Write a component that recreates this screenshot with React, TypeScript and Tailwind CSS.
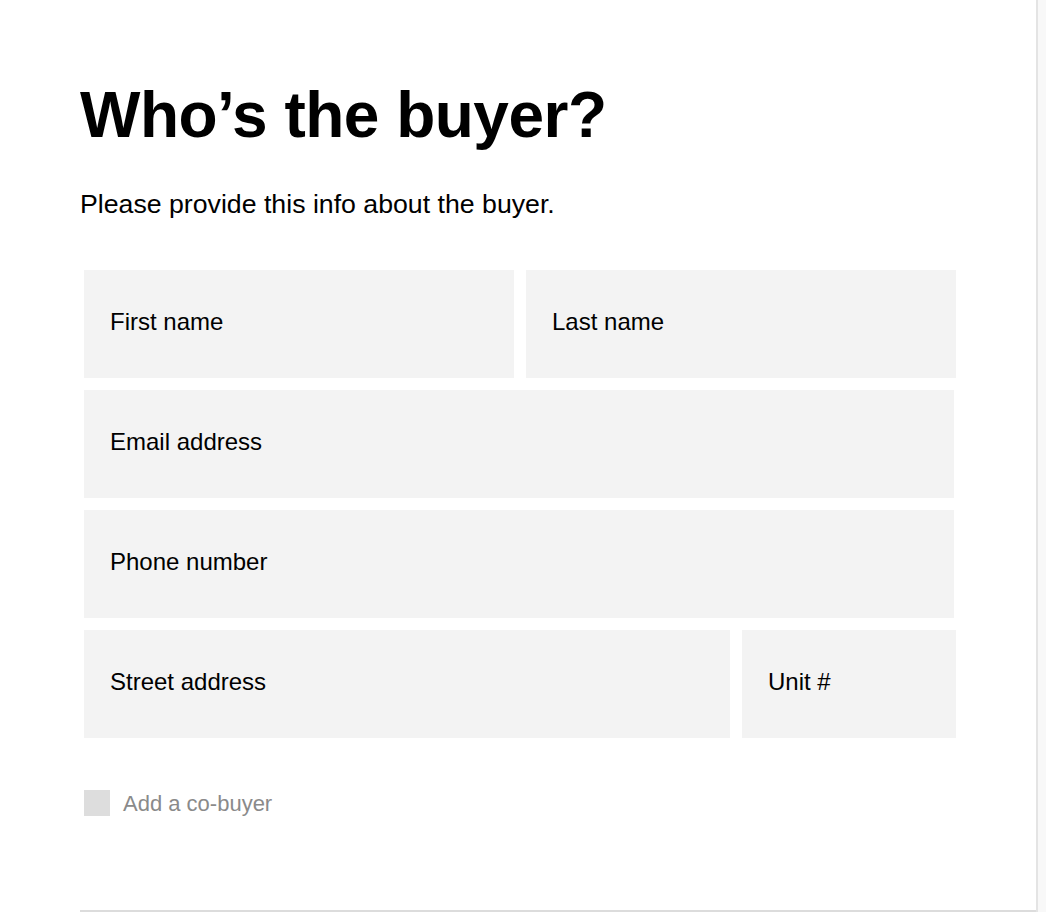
import React from "react";

const Field = ({ label, className = "" }: { label: string; className?: string }) => (
  <div className={`h-[108px] bg-[#f3f3f3] flex items-center pl-[26px] pb-[3px] text-[24px] text-black ${className}`}>
    {label}
  </div>
);

export default function App() {
  return (
    <div className="min-h-[912px] bg-[#f8f8f8] flex" style={{ fontFamily: '"Liberation Sans", Arial, sans-serif' }}>
      <div className="w-[1038px] bg-white border-r-2 border-[#e4e4e4] pl-[80px] flex flex-col">
        <div className="border-b-2 border-[#dcdcdc] h-[912px] pt-[83px]">
          <h1 className="text-[64px] font-bold leading-none tracking-[-0.5px] text-black">Who’s the buyer?</h1>
          <p className="mt-[44px] text-[26.7px] leading-none text-black">Please provide this info about the buyer.</p>
          <div className="mt-[52px] ml-[4px] w-[872px] flex flex-col gap-[12px]">
            <div className="flex gap-[12px]">
              <Field label="First name" className="w-[430px]" />
              <Field label="Last name" className="w-[430px]" />
            </div>
            <Field label="Email address" className="w-[870px]" />
            <Field label="Phone number" className="w-[870px]" />
            <div className="flex gap-[12px]">
              <Field label="Street address" className="w-[646px]" />
              <Field label="Unit #" className="w-[214px]" />
            </div>
          </div>
          <label className="mt-[52px] ml-[4px] flex items-center gap-[13px]">
            <span className="w-[26px] h-[26px] bg-[#dddddd] block" />
            <span className="text-[22px] leading-none pt-[3px] text-[#8a8a8a]">Add a co-buyer</span>
          </label>
        </div>
      </div>
    </div>
  );
}
